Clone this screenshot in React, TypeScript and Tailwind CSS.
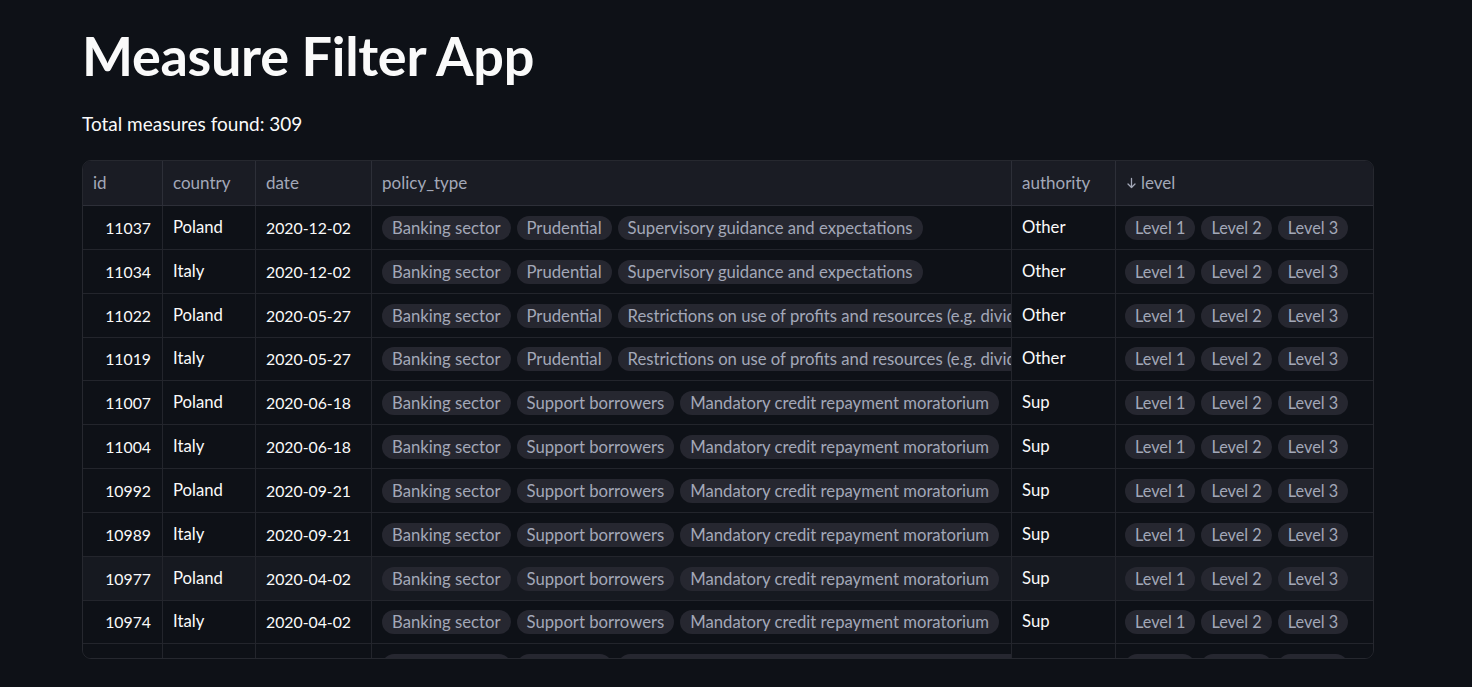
import React from 'react';

type Row = {
  id: number;
  country: string;
  date: string;
  policy: string[];
  authority: string;
};

const guidance = ['Banking sector', 'Prudential', 'Supervisory guidance and expectations'];
const restrictions = ['Banking sector', 'Prudential', 'Restrictions on use of profits and resources (e.g. dividends, buybacks, bonuses)'];
const moratorium = ['Banking sector', 'Support borrowers', 'Mandatory credit repayment moratorium'];

const rows: Row[] = [
  { id: 11037, country: 'Poland', date: '2020-12-02', policy: guidance, authority: 'Other' },
  { id: 11034, country: 'Italy', date: '2020-12-02', policy: guidance, authority: 'Other' },
  { id: 11022, country: 'Poland', date: '2020-05-27', policy: restrictions, authority: 'Other' },
  { id: 11019, country: 'Italy', date: '2020-05-27', policy: restrictions, authority: 'Other' },
  { id: 11007, country: 'Poland', date: '2020-06-18', policy: moratorium, authority: 'Sup' },
  { id: 11004, country: 'Italy', date: '2020-06-18', policy: moratorium, authority: 'Sup' },
  { id: 10992, country: 'Poland', date: '2020-09-21', policy: moratorium, authority: 'Sup' },
  { id: 10989, country: 'Italy', date: '2020-09-21', policy: moratorium, authority: 'Sup' },
  { id: 10977, country: 'Poland', date: '2020-04-02', policy: moratorium, authority: 'Sup' },
  { id: 10974, country: 'Italy', date: '2020-04-02', policy: moratorium, authority: 'Sup' },
  { id: 10962, country: 'Poland', date: '2020-03-31', policy: restrictions, authority: 'Other' },
];

const levels = ['Level 1', 'Level 2', 'Level 3'];

const cols = 'grid grid-cols-[80px_93px_116px_640px_104px_1fr]';

const Pill: React.FC<{ label: string; small?: boolean }> = ({ label, small }) => (
  <span
    className={`shrink-0 whitespace-nowrap rounded-full bg-[#262730] px-[10px] h-[24px] leading-[24px] text-[#a3a8b8] ${small ? 'text-[16.3px]' : ''}`}
  >
    {label}
  </span>
);

const HeaderCell: React.FC<{ children: React.ReactNode; last?: boolean }> = ({ children, last }) => (
  <div className={`flex items-center px-[10px] ${last ? '' : 'border-r border-[#2d2f38]'}`}>{children}</div>
);

export default function App() {
  return (
    <div className="min-h-screen bg-[#0e1117] text-[#fafafa]" style={{ fontFamily: 'Lato, "Noto Sans", sans-serif' }}>
      <div className="pl-[82px] pt-[24px]">
        <h1 className="text-[54px] font-bold leading-[64px] tracking-[-0.3px]">Measure Filter App</h1>
        <p className="mt-[22px] text-[19px] leading-[28px]">Total measures found: 309</p>

        <div className="mt-[22px] w-[1292px] h-[499px] overflow-hidden rounded-[9px] border border-[#26282f] text-[16.7px]">
          <div className={`${cols} h-[45px] bg-[#1a1c24] border-b border-[#2d2f38] text-[#a3a8b8] text-[17px]`}>
            <HeaderCell>id</HeaderCell>
            <HeaderCell>country</HeaderCell>
            <HeaderCell>date</HeaderCell>
            <HeaderCell>policy_type</HeaderCell>
            <HeaderCell>authority</HeaderCell>
            <HeaderCell last>
              <svg width="11" height="12" viewBox="0 0 11 12" className="mr-[4px]" fill="none" stroke="#a3a8b8" strokeWidth="1.3" strokeLinecap="round" strokeLinejoin="round">
                <path d="M5.5 1.5v9M2 7l3.5 3.5L9 7" />
              </svg>
              level
            </HeaderCell>
          </div>

          {rows.map((r, i) => (
            <div
              key={r.id}
              className={`${cols} ${i === 3 || i === 9 ? 'h-[43px]' : 'h-[44px]'} border-b border-[#23252c] ${i === 8 ? 'bg-[#161920]' : 'bg-[#0e1117]'}`}
            >
              <div className="flex items-center justify-end pr-[11px] text-[15.8px] border-r border-[#23252c]">{r.id}</div>
              <div className="flex items-center px-[10px] border-r border-[#23252c]">{r.country}</div>
              <div className="flex items-center px-[10px] text-[15.8px] border-r border-[#23252c]">{r.date}</div>
              <div className="flex items-center gap-[6px] pl-[10px] overflow-hidden border-r border-[#23252c]">
                {r.policy.map((p) => (
                  <Pill key={p} label={p} />
                ))}
              </div>
              <div className="flex items-center px-[10px] border-r border-[#23252c]">{r.authority}</div>
              <div className="flex items-center gap-[6px] pl-[9px] overflow-hidden">
                {levels.map((l) => (
                  <Pill key={l} label={l} small />
                ))}
              </div>
            </div>
          ))}
        </div>
      </div>
    </div>
  );
}
